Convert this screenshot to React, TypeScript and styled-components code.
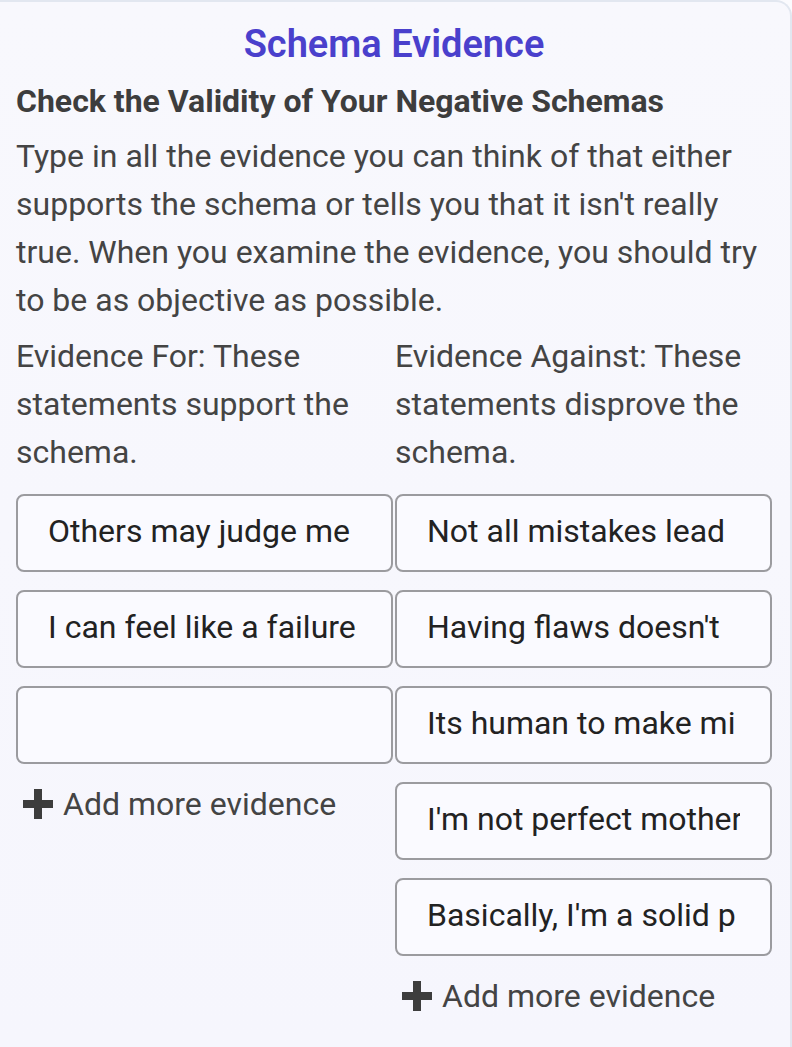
import React from "react";
import styled, { createGlobalStyle } from "styled-components";

const Global = createGlobalStyle`
  html, body { margin: 0; padding: 0; background: #fbfbfe; }
  body { font-family: Roboto, "Noto Sans", sans-serif; }
  * { box-sizing: border-box; }
`;

const Card = styled.div`
  width: 792px;
  min-height: 1047px;
  background: linear-gradient(180deg, #f8f8fd 0%, #f6f6fd 100%);
  border-top: 2px solid #e2e7f0;
  border-right: 2px solid #e2e7f0;
  border-top-right-radius: 16px;
  padding: 18px 18px 0 16px;
  display: flex;
  flex-direction: column;
`;

const Title = styled.h1`
  margin: 0;
  font-size: 38px;
  line-height: 48px;
  font-weight: 600;
  color: #4a40cc;
  text-align: center;
`;

const Subtitle = styled.h2`
  margin: 15px 0 0;
  font-size: 32px;
  line-height: 36px;
  font-weight: 700;
  color: #3d3d3d;
  white-space: nowrap;
`;

const Paragraph = styled.p`
  margin: 13px 0 0;
  font-size: 32px;
  line-height: 48px;
  color: #444444;
`;

const Columns = styled.div`
  margin-top: 8px;
  display: grid;
  grid-template-columns: 377px 377px;
  column-gap: 2px;
  align-items: start;
`;

const Column = styled.div`
  display: flex;
  flex-direction: column;
`;

const Label = styled.div`
  font-size: 32px;
  line-height: 48px;
  color: #444444;
  margin-bottom: 18px;
`;

const Inputs = styled.div`
  display: flex;
  flex-direction: column;
  gap: 18px;
`;

const Input = styled.input`
  width: 100%;
  height: 78px;
  border: 2px solid #9b9b9f;
  border-radius: 8px;
  background: #fafaff;
  padding: 0 30px 5px;
  font-family: Roboto, "Noto Sans", sans-serif;
  font-size: 32px;
  color: #222222;
  outline: none;
`;

const AddButton = styled.button`
  margin-top: 16px;
  display: flex;
  align-items: center;
  gap: 10px;
  background: none;
  border: none;
  padding: 0 0 0 7px;
  font-family: Roboto, "Noto Sans", sans-serif;
  font-size: 32px;
  line-height: 48px;
  color: #444444;
  cursor: pointer;
  text-align: left;
`;

const Plus = () => (
  <svg width="30" height="30" viewBox="0 0 30 30" aria-hidden="true">
    <rect x="11" y="0" width="8" height="30" fill="#3d3d3d" />
    <rect x="0" y="11" width="30" height="8" fill="#3d3d3d" />
  </svg>
);

const forItems = ["Others may judge me", "I can feel like a failure", ""];
const againstItems = [
  "Not all mistakes lead",
  "Having flaws doesn't",
  "Its human to make mi",
  "I'm not perfect mother",
  "Basically, I'm a solid p",
];

const EvidenceColumn = ({ label, items }: { label: string; items: string[] }) => (
  <Column>
    <Label>{label}</Label>
    <Inputs>
      {items.map((v, i) => (
        <Input key={i} defaultValue={v} />
      ))}
    </Inputs>
    <AddButton>
      <Plus />
      Add more evidence
    </AddButton>
  </Column>
);

export default function App() {
  return (
    <>
      <Global />
      <Card>
        <Title>Schema Evidence</Title>
        <Subtitle>Check the Validity of Your Negative Schemas</Subtitle>
        <Paragraph>
          Type in all the evidence you can think of that either supports the schema or tells you
          that it isn't really true. When you examine the evidence, you should try to be as
          objective as possible.
        </Paragraph>
        <Columns>
          <EvidenceColumn label="Evidence For: These statements support the schema." items={forItems} />
          <EvidenceColumn label="Evidence Against: These statements disprove the schema." items={againstItems} />
        </Columns>
      </Card>
    </>
  );
}
